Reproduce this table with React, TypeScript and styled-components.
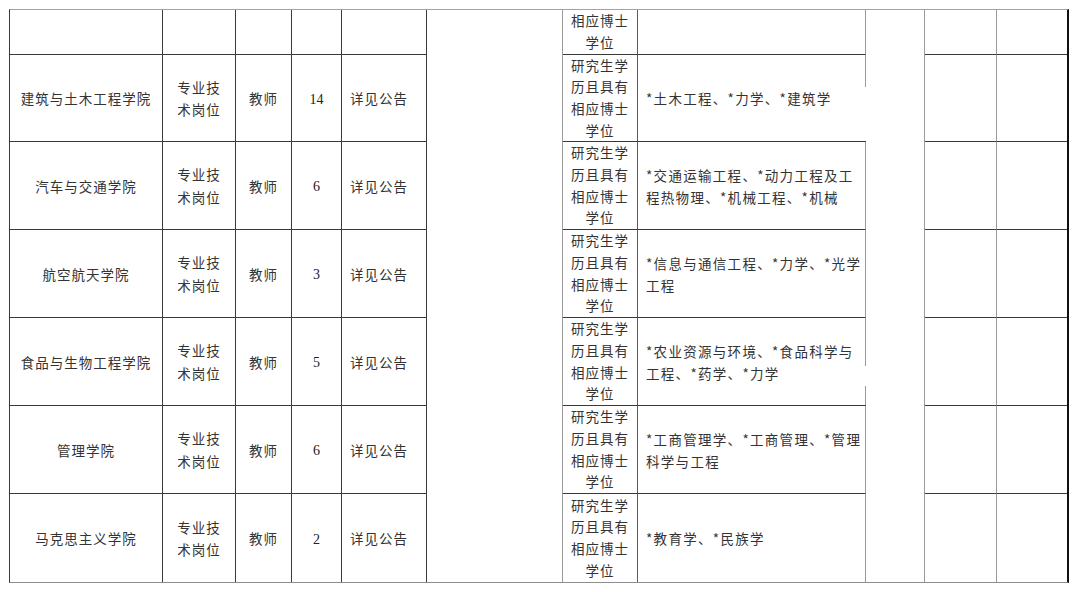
import React from 'react';
import styled, { createGlobalStyle, css } from 'styled-components';

const Global = createGlobalStyle`
  html, body { margin: 0; padding: 0; background: #fff; }
  body { font-family: "Noto Sans CJK SC", "Noto Sans", sans-serif; }
`;

type Edge = 'dark' | 'mid' | 'light' | 'none';
const edgeColor: Record<Edge, string> = {
  dark: '#3a3a3a',
  mid: '#5c5c5c',
  light: '#9a9a9a',
  none: 'transparent',
};

const Sheet = styled.div`
  display: grid;
  width: max-content;
  margin: 9px 0 0 9px;
  grid-template-columns: 153px 73px 56px 50px 85px 136px 75px 228px 59px 72px 70px;
  grid-template-rows: 45px 87px 88px 88px 88px 88px 88px;
  border-top: 1px solid #a3a3a3;
  border-left: 1px solid #3a3a3a;
  border-right: 2px solid #111;
  border-bottom: 1px solid #8e8e8e;
  color: #333;
  font-size: 13.5px;
  letter-spacing: 1px;
`;

const Cell = styled.div<{ $edge: Edge; $floor?: boolean; $left?: boolean; $gap?: [number, number] }>`
  box-sizing: border-box;
  display: flex;
  flex-direction: column;
  justify-content: center;
  align-items: ${p => (p.$left ? 'flex-start' : 'center')};
  text-align: ${p => (p.$left ? 'left' : 'center')};
  padding: ${p => (p.$left ? '0 0 0 8px' : '0')};
  overflow: hidden;
  white-space: nowrap;
  border-right: ${p => (p.$edge === 'none' ? '0' : `1px solid ${edgeColor[p.$edge]}`)};
  border-bottom: ${p => (p.$floor ? '1px solid #3a3a3a' : '0')};
  ${p =>
    p.$gap &&
    css`
      border-right: 0;
      background: linear-gradient(
          to bottom,
          ${edgeColor.light} 0 ${p.$gap[0]}px,
          transparent ${p.$gap[0]}px ${p.$gap[1]}px,
          ${edgeColor.light} ${p.$gap[1]}px 100%
        )
        right top / 1px 100% no-repeat;
    `}
`;

const MajorCell = styled(Cell)`
  letter-spacing: 1.3px;
`;

const Merged = styled.div<{ $col: number; $edge: Edge }>`
  grid-column: ${p => p.$col};
  grid-row: 1 / span 7;
  border-right: 1px solid ${p => edgeColor[p.$edge]};
`;

const Line = styled.span<{ $lh: number }>`
  display: block;
  line-height: ${p => p.$lh}px;
`;

const Num = styled.span`
  font-family: "Liberation Serif", "Times New Roman", serif;
  font-size: 14px;
  letter-spacing: 0;
  padding-top: 3px;
  color: #222;
`;

const Lines: React.FC<{ lines: string[]; lh: number }> = ({ lines, lh }) => (
  <>
    {lines.map((l, i) => (
      <Line key={i} $lh={lh}>
        {l}
      </Line>
    ))}
  </>
);

interface Row {
  college: string;
  count: string;
  majors: string[];
  gap?: [number, number];
}

const rows: Row[] = [
  { college: '建筑与土木工程学院', count: '14', majors: ['*土木工程、*力学、*建筑学'], gap: [32, 90] },
  { college: '汽车与交通学院', count: '6', majors: ['*交通运输工程、*动力工程及工', '程热物理、*机械工程、*机械'] },
  { college: '航空航天学院', count: '3', majors: ['*信息与通信工程、*力学、*光学', '工程'] },
  { college: '食品与生物工程学院', count: '5', majors: ['*农业资源与环境、*食品科学与', '工程、*药学、*力学'], gap: [48, 68] },
  { college: '管理学院', count: '6', majors: ['*工商管理学、*工商管理、*管理', '科学与工程'] },
  { college: '马克思主义学院', count: '2', majors: ['*教育学、*民族学'] },
];

const degree = ['研究生学', '历且具有', '相应博士', '学位'];

export default function App() {
  return (
    <>
      <Global />
      <Sheet>
        <Merged $col={6} $edge="light" />
        <Merged $col={9} $edge="light" />

        <Cell $edge="dark" $floor />
        <Cell $edge="dark" $floor />
        <Cell $edge="dark" $floor />
        <Cell $edge="dark" $floor />
        <Cell $edge="dark" $floor />
        <Cell $edge="mid" $floor>
          <Lines lines={['相应博士', '学位']} lh={21.7} />
        </Cell>
        <Cell $edge="light" $floor />
        <Cell $edge="light" $floor />
        <Cell $edge="none" $floor />

        {rows.map((r, i) => {
          const floor = i < rows.length - 1;
          return (
            <React.Fragment key={r.college}>
              <Cell $edge="dark" $floor={floor}>
                {r.college}
              </Cell>
              <Cell $edge="dark" $floor={floor}>
                <Lines lines={['专业技', '术岗位']} lh={22.5} />
              </Cell>
              <Cell $edge="dark" $floor={floor}>
                教师
              </Cell>
              <Cell $edge="dark" $floor={floor}>
                <Num>{r.count}</Num>
              </Cell>
              <Cell $edge="dark" $floor={floor} $left>
                详见公告
              </Cell>
              <Cell $edge="mid" $floor={floor}>
                <Lines lines={degree} lh={21.7} />
              </Cell>
              <MajorCell $edge="light" $floor={floor} $left $gap={r.gap}>
                <Lines lines={r.majors} lh={22} />
              </MajorCell>
              <Cell $edge="light" $floor={floor} />
              <Cell $edge="none" $floor={floor} />
            </React.Fragment>
          );
        })}
      </Sheet>
    </>
  );
}
